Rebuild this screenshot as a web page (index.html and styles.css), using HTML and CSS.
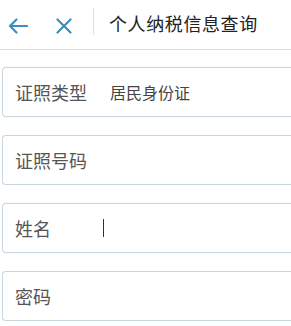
FILE: index.html
```html
<!DOCTYPE html>
<html lang="zh">
<head>
<meta charset="utf-8">
<title>个人纳税信息查询</title>
<link rel="stylesheet" href="styles.css">
</head>
<body>
<header class="topbar">
  <span class="icon back">
    <svg width="20" height="16" viewBox="0 0 20 16"><path d="M19 8H2M8.5 1.5L2 8l6.5 6.5" fill="none" stroke="#3d8dbf" stroke-width="2.2" stroke-linecap="round" stroke-linejoin="round"/></svg>
  </span>
  <span class="icon close">
    <svg width="16" height="16" viewBox="0 0 16 16"><path d="M1.5 1.5l13 13M14.5 1.5l-13 13" fill="none" stroke="#3d8dbf" stroke-width="2.2" stroke-linecap="round"/></svg>
  </span>
  <span class="divider"></span>
  <h1 class="title">个人纳税信息查询</h1>
</header>
<main class="form">
  <div class="field"><span class="label">证照类型</span><span class="value">居民身份证</span></div>
  <div class="field"><span class="label">证照号码</span></div>
  <div class="field"><span class="label">姓名</span><span class="cursor"></span></div>
  <div class="field"><span class="label">密码</span></div>
</main>
</body>
</html>
```
FILE: styles.css
```css
html, body {
  margin: 0;
  padding: 0;
  background: #ffffff;
  overflow: hidden;
  font-family: "Noto Sans CJK SC", "Noto Sans", sans-serif;
}
.topbar {
  height: 49px;
  border-bottom: 1px solid #dcdcdc;
  display: flex;
  align-items: center;
  padding-left: 8px;
}
.icon {
  display: flex;
  align-items: center;
}
.back { margin-top: 2px; }
.close { margin-left: 28px; margin-top: 2px; }
.divider {
  width: 1px;
  height: 27px;
  background: #e0e0e0;
  margin-left: 21px;
  margin-top: -6px;
}
.title {
  margin: 0 0 3px 15px;
  font-size: 18px;
  font-weight: 400;
  letter-spacing: 0.6px;
  color: #222;
  line-height: 1;
}
.form {
  padding: 17px 0 0 2px;
  display: flex;
  flex-direction: column;
  gap: 18px;
}
.field {
  height: 50px;
  box-sizing: border-box;
  border: 1px solid #c9d5dd;
  border-right: none;
  border-radius: 4px 0 0 4px;
  display: flex;
  align-items: center;
  padding-left: 12px;
}
.label {
  width: 95px;
  font-size: 18px;
  color: #555;
  flex: none;
}
.value {
  font-size: 16px;
  color: #444;
}
.cursor {
  width: 1px;
  height: 18px;
  background: #333;
  margin-left: -7px;
}
```
